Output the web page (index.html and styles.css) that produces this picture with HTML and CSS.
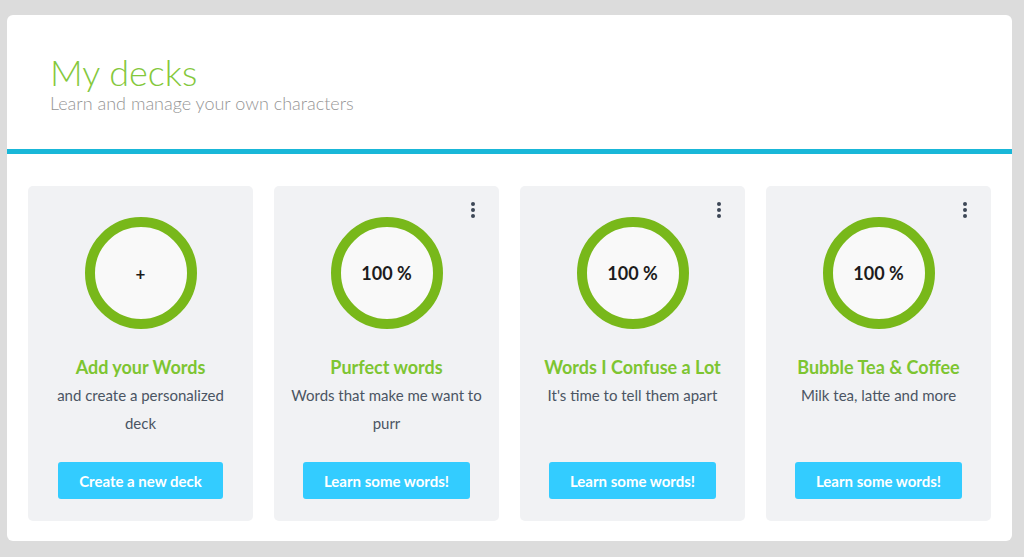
FILE: index.html
```html
<!DOCTYPE html>
<html lang="en">
<head>
    <meta charset="UTF-8">
    <meta name="viewport" content="width=device-width, initial-scale=1.0">
    <title>My decks</title>
    <link rel="stylesheet" href="styles.css">
</head>
<body>

<div class="panel">
    <div class="header">
        <h1>My decks</h1>
        <p class="subtitle">Learn and manage your own characters</p>
    </div>

    <div class="decks">
        <div class="deck">
            <div class="ring"><span class="plus">+</span></div>
            <h2>Add your Words</h2>
            <p>and create a personalized deck</p>
            <button>Create a new deck</button>
        </div>

        <div class="deck">
            <span class="menu"><i></i><i></i><i></i></span>
            <div class="ring"><span>100 %</span></div>
            <h2>Purfect words</h2>
            <p>Words that make me want to purr</p>
            <button>Learn some words!</button>
        </div>

        <div class="deck">
            <span class="menu"><i></i><i></i><i></i></span>
            <div class="ring"><span>100 %</span></div>
            <h2>Words I Confuse a Lot</h2>
            <p>It's time to tell them apart</p>
            <button>Learn some words!</button>
        </div>

        <div class="deck">
            <span class="menu"><i></i><i></i><i></i></span>
            <div class="ring"><span>100 %</span></div>
            <h2>Bubble Tea &amp; Coffee</h2>
            <p>Milk tea, latte and more</p>
            <button>Learn some words!</button>
        </div>
    </div>
</div>

</body>
</html>
```

FILE: styles.css
```css
body {
    margin: 0;
    background: #dcdcdc;
    font-family: Lato, "Open Sans", sans-serif;
    padding: 15px 12px 16px 7px;
}
.panel {
    background: #fff;
    border-radius: 6px;
    height: 526px;
    box-sizing: border-box;
}
.header {
    height: 139px;
    box-sizing: border-box;
    padding: 35px 0 0 43px;
    border-bottom: 5px solid #19b7d8;
}
.header h1 {
    margin: 0;
    font-size: 36px;
    font-weight: 300;
    color: #84c83c;
    line-height: 44px;
}
.subtitle {
    margin: -2px 0 0 0;
    font-size: 18px;
    font-weight: 300;
    color: #959595;
}
.decks {
    display: flex;
    gap: 21px;
    padding: 32px 21px 0 21px;
}
.deck {
    position: relative;
    width: 225px;
    height: 335px;
    box-sizing: border-box;
    background: #f1f2f4;
    border-radius: 5px;
    padding: 31px 12px 22px;
    display: flex;
    flex-direction: column;
    align-items: center;
    text-align: center;
}
.ring {
    width: 112px;
    height: 112px;
    box-sizing: border-box;
    border: 10px solid #78b81a;
    border-radius: 50%;
    background: #f9f9f9;
    display: flex;
    align-items: center;
    justify-content: center;
    font-size: 18px;
    font-weight: 700;
    color: #1c1c1c;
}
.plus {
    font-size: 17px;
}
.deck h2 {
    margin: 24px 0 0 0;
    font-size: 18px;
    font-weight: 700;
    line-height: 28px;
    color: #7dc531;
}
.deck p {
    margin: 0;
    font-size: 15px;
    line-height: 28px;
    color: #4b5563;
}
.deck button {
    margin-top: auto;
    height: 37px;
    padding: 0 21px;
    border: none;
    border-radius: 3px;
    background: #33ccff;
    color: #fff;
    font-family: inherit;
    font-size: 15px;
    font-weight: 700;
    cursor: pointer;
}
.menu {
    position: absolute;
    top: 16px;
    right: 24px;
    display: flex;
    flex-direction: column;
    gap: 2px;
}
.menu i {
    width: 4px;
    height: 4px;
    border-radius: 50%;
    background: #3d4756;
}
```
